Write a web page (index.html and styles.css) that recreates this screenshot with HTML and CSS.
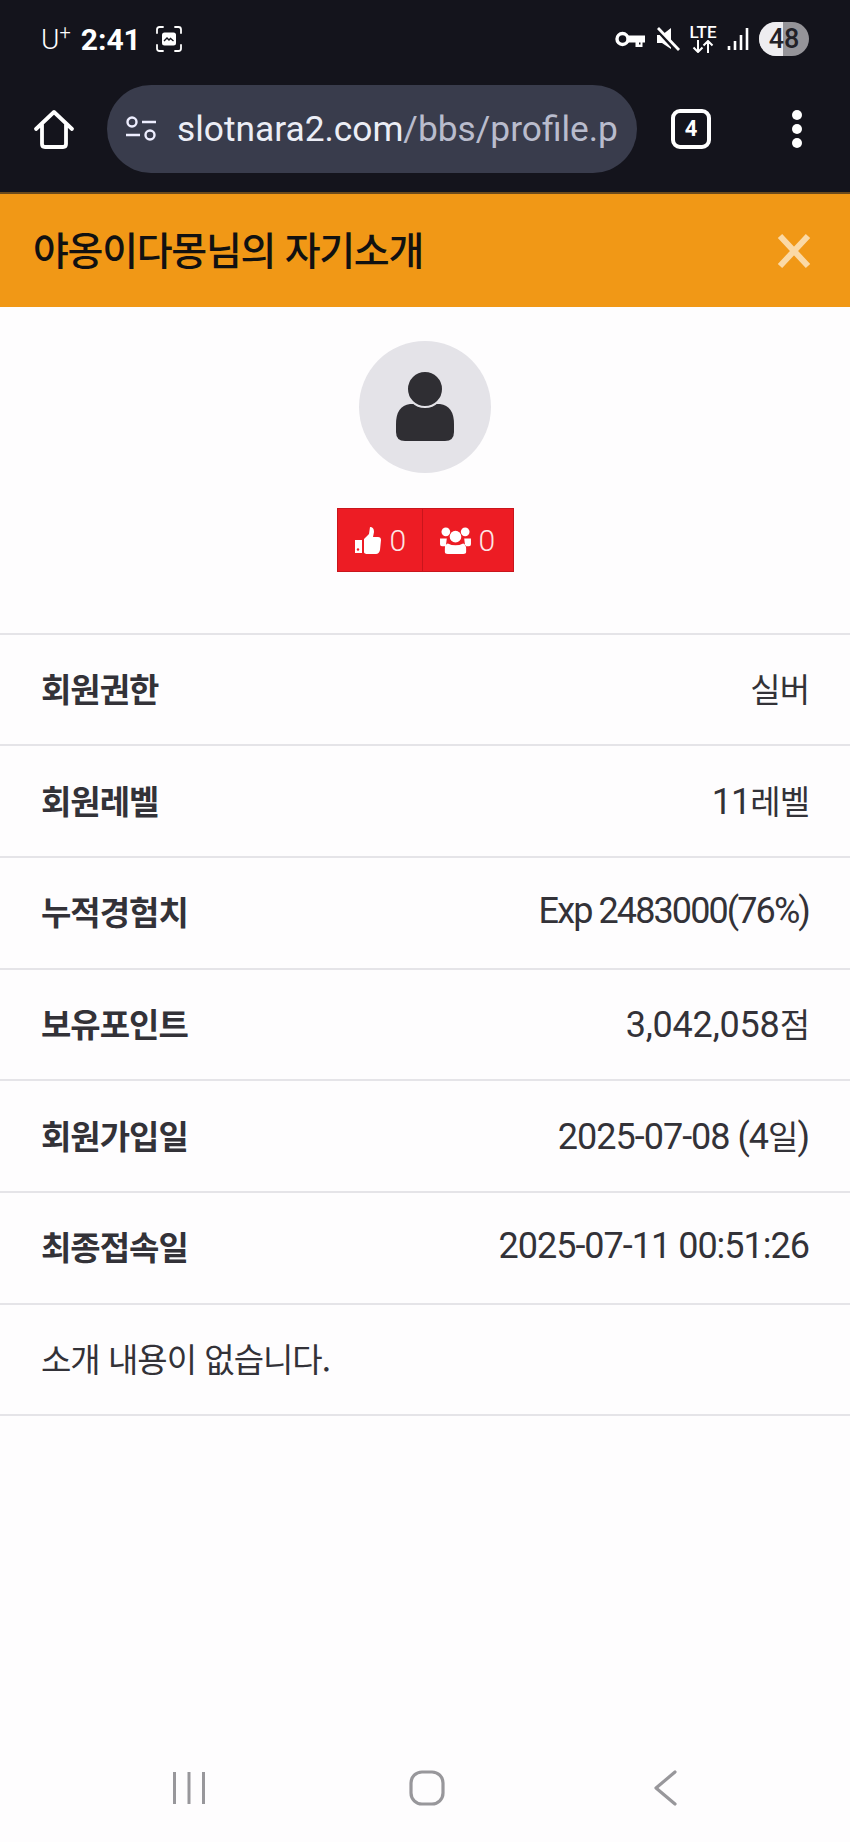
FILE: index.html
```html
<!DOCTYPE html>
<html lang="ko">
<head>
    <meta charset="UTF-8">
    <meta name="viewport" content="width=device-width, initial-scale=1.0">
    <title>야옹이다몽님의 자기소개</title>
    <link rel="stylesheet" href="styles.css">
</head>
<body>
    <div class="phone">
        <div class="top-chrome">
            <div class="status-bar">
                <div class="status-left">
                    <span class="carrier">U<sup>+</sup></span>
                    <span class="clock">2:41</span>
                    <svg class="shot-icon" width="28" height="28" viewBox="0 0 28 28">
                        <path d="M2 8V4.500Q2 2 4.500 2H8M20 2h3.500Q26 2 26 4.500V8M26 20v3.500Q26 26 23.500 26H20M8 26H4.500Q2 26 2 23.500V20" fill="none" stroke="#fff" stroke-width="1.800" stroke-linecap="round"/>
                        <path d="M7 10Q7 7.500 9.500 7.500h9Q21 7.500 21 10v8Q21 20.500 18.500 20.500h-9Q7 20.500 7 18Z" fill="#fff"/>
                        <path d="M9 16l3-3 2 2 1.500-1.500 3 2.500" fill="none" stroke="#14141c" stroke-width="1.400"/>
                    </svg>
                </div>
                <div class="status-right">
                    <svg width="30" height="18" viewBox="0 0 30 18">
                        <circle cx="7.500" cy="9" r="5.500" fill="none" stroke="#fff" stroke-width="3.400"/>
                        <path d="M13 5.500h17v7h-2.500V17h-7v-4.500H13Zm11 7v2h1.500v-2Z" fill="#fff"/>
                    </svg>
                    <svg width="24" height="24" viewBox="0 0 24 24">
                        <path d="M1 8h5l9-7v21l-9-6H1Z" fill="#fff"/>
                        <path d="M0 1l21 23" stroke="#14141c" stroke-width="4"/>
                        <path d="M2 1l21 22" stroke="#fff" stroke-width="2.800"/>
                    </svg>
                    <div class="lte">
                        <span>LTE</span>
                        <svg width="22" height="13" viewBox="0 0 22 13">
                            <path d="M6 0v12M1.500 7.500L6 12l4.500-4.500M16 13V1M11.500 5.500L16 1l4.500 4.500" fill="none" stroke="#fff" stroke-width="2"/>
                        </svg>
                    </div>
                    <svg width="22" height="24" viewBox="0 0 22 24">
                        <path d="M2 19v4M8 14v9M14 8v15M20 1v22" stroke="#fff" stroke-width="2.600"/>
                    </svg>
                    <div class="battery"><span class="battery-fill"></span><span class="battery-num">48</span></div>
                </div>
            </div>
            <div class="url-row">
                <svg class="home-icon" width="42" height="42" viewBox="0 0 42 42">
                    <path d="M3 21L21 4l18 17M9 16v20q0 3 3 3h18q3 0 3-3V16" fill="none" stroke="#fff" stroke-width="3.800" stroke-linecap="round" stroke-linejoin="round"/>
                </svg>
                <div class="url-box">
                    <svg width="34" height="28" viewBox="0 0 34 28">
                        <circle cx="8" cy="7" r="4.500" fill="none" stroke="#eef" stroke-width="2.400"/>
                        <path d="M18 7h14M2 20h14" stroke="#eef" stroke-width="2.400"/>
                        <circle cx="26" cy="20" r="4.500" fill="none" stroke="#eef" stroke-width="2.400"/>
                    </svg>
                    <span class="url-text"><span class="url-host">slotnara2.com</span>/bbs/profile.p</span>
                </div>
                <div class="tab-count">4</div>
                <div class="menu-dots"><i></i><i></i><i></i></div>
            </div>
        </div>

        <div class="title-bar">
            <h1>야옹이다몽님의 자기소개</h1>
            <svg width="36" height="36" viewBox="0 0 36 36">
                <path d="M4 3l28 30M32 3L4 33" stroke="#fbd9a5" stroke-width="6"/>
            </svg>
        </div>

        <div class="profile-head">
            <div class="avatar">
                <svg width="58" height="72" viewBox="0 0 58 72">
                    <path d="M14 33h30q14 2 14 20v8q0 9-9 9H9q-9 0-9-9v-8q0-18 14-20Z" fill="#2f2e33"/>
                    <circle cx="29" cy="18" r="18" fill="#2f2e33" stroke="#e4e3e8" stroke-width="2"/>
                </svg>
            </div>
            <div class="counters">
                <div class="counter counter-like">
                    <svg width="26" height="27" viewBox="0 0 26 27">
                        <path d="M0 13h7v13H0Z" fill="#fff"/>
                        <circle cx="3" cy="22.500" r="1.200" fill="#ed1c24"/>
                        <path d="M9 12l5-5 1-7q4 0 4 5l-1 5h5q3 0 3 3l-1 10q-1 4-4 4H13q-4 0-4-2Z" fill="#fff"/>
                    </svg>
                    <span>0</span>
                </div>
                <div class="counter counter-friend">
                    <svg width="31" height="29" viewBox="0 0 32 30">
                        <circle cx="6" cy="6" r="4.500" fill="#fff"/>
                        <circle cx="26" cy="6" r="4.500" fill="#fff"/>
                        <circle cx="16" cy="11" r="6" fill="#fff"/>
                        <path d="M0 13h7l-1 8H2Q0 21 0 19ZM32 13h-7l1 8h4q2 0 2-2ZM8 18q8 4 16 0q3 1 3 5v4q0 2-3 2H8q-3 0-3-2v-4q0-4 3-5Z" fill="#fff"/>
                    </svg>
                    <span>0</span>
                </div>
            </div>
        </div>

        <div class="info-list">
            <div class="info-row"><b>회원권한</b><span>실버</span></div>
            <div class="info-row"><b>회원레벨</b><span><span class="num">11</span>레벨</span></div>
            <div class="info-row"><b>누적경험치</b><span class="num num-tight">Exp 2483000(76%)</span></div>
            <div class="info-row"><b>보유포인트</b><span><span class="num num-wide">3,042,058</span>점</span></div>
            <div class="info-row"><b>회원가입일</b><span><span class="num">2025-07-08 (4</span>일<span class="num">)</span></span></div>
            <div class="info-row"><b>최종접속일</b><span class="num">2025-07-11 00:51:26</span></div>
            <div class="info-row">소개 내용이 없습니다.</div>
        </div>

        <div class="nav-bar">
            <svg width="36" height="34" viewBox="0 0 36 34">
                <path d="M3.500 1v32M18 1v32M32.500 1v32" stroke="#98979b" stroke-width="3"/>
            </svg>
            <svg class="nav-home" width="36" height="36" viewBox="0 0 36 36">
                <rect x="2" y="2" width="32" height="32" rx="11" fill="none" stroke="#98979b" stroke-width="3.200"/>
            </svg>
            <svg class="nav-back" width="24" height="36" viewBox="0 0 24 36">
                <path d="M22 2L3 18l19 16" fill="none" stroke="#98979b" stroke-width="3.200" stroke-linecap="round" stroke-linejoin="round"/>
            </svg>
        </div>
    </div>
</body>
</html>
```

FILE: styles.css
```css
* {
    box-sizing: border-box;
}
body {
    margin: 0;
    background-color: #fefdfe;
    font-family: "Noto Sans CJK KR", "Noto Sans", Roboto, sans-serif;
    color: #333238;
}
.phone {
    width: 850px;
    height: 1842px;
    display: flex;
    flex-direction: column;
}

/* status bar and browser bar */
.top-chrome {
    height: 194px;
    flex: none;
    background-color: #14141c;
    color: #fff;
    border-bottom: 2px solid #6b4a1c;
}
.status-bar {
    height: 78px;
    padding: 0 41px;
    display: flex;
    justify-content: space-between;
    align-items: center;
}
.status-left, .status-right {
    display: flex;
    align-items: center;
}
.carrier {
    font-family: Roboto, sans-serif;
    font-size: 28px;
    font-weight: 300;
}
.carrier sup {
    font-size: 20px;
    line-height: 0;
    vertical-align: 10px;
}
.clock {
    margin-left: 10px;
    font-family: Roboto, sans-serif;
    font-size: 30px;
    font-weight: 700;
}
.shot-icon {
    margin-left: 14px;
}
.status-right {
    gap: 10.500px;
}
.lte {
    width: 26px;
    display: flex;
    flex-direction: column;
    align-items: center;
    font-family: Roboto, sans-serif;
    font-size: 17px;
    font-weight: 500;
    line-height: 15px;
}
.battery {
    position: relative;
    width: 50px;
    height: 34px;
    border-radius: 17px;
    overflow: hidden;
    background-color: #959499;
    text-align: center;
}
.battery-fill {
    position: absolute;
    left: 0;
    top: 0;
    width: 24px;
    height: 34px;
    background-color: #eeedf0;
}
.battery-num {
    position: relative;
    font-family: Roboto, sans-serif;
    font-size: 27px;
    font-weight: 500;
    line-height: 34px;
    color: #222127;
}
.url-row {
    height: 102px;
    padding-left: 33px;
    display: flex;
    align-items: center;
}
.url-box {
    width: 530px;
    height: 88px;
    margin-left: 32px;
    padding-left: 17px;
    border-radius: 44px;
    background-color: #393c4c;
    display: flex;
    align-items: center;
    gap: 19px;
}
.url-text {
    font-family: Roboto, sans-serif;
    font-size: 35.300px;
    color: #b9bccd;
    white-space: nowrap;
}
.url-host {
    color: #eceef6;
}
.tab-count {
    width: 40px;
    height: 40px;
    margin-left: 34px;
    border: 4px solid #fff;
    border-radius: 9px;
    font-family: Roboto, sans-serif;
    font-size: 22px;
    font-weight: 700;
    line-height: 32px;
    text-align: center;
}
.menu-dots {
    margin-left: 81px;
    display: flex;
    flex-direction: column;
    gap: 4px;
}
.menu-dots i {
    width: 10px;
    height: 10px;
    border-radius: 50%;
    background-color: #fff;
}

/* orange title */
.title-bar {
    height: 113px;
    flex: none;
    padding: 0 38px 0 33px;
    background-color: #f19816;
    display: flex;
    justify-content: space-between;
    align-items: center;
}
.title-bar h1 {
    margin: 0 0 6px;
    font-size: 39px;
    font-weight: 500;
    letter-spacing: -1.300px;
    color: #111;
}

/* avatar and red counters */
.profile-head {
    height: 325.500px;
    flex: none;
    padding-top: 34px;
    display: flex;
    flex-direction: column;
    align-items: center;
}
.avatar {
    width: 132px;
    height: 132px;
    border-radius: 50%;
    background-color: #e4e3e8;
    display: flex;
    justify-content: center;
    align-items: center;
}
.counters {
    margin-top: 35px;
    display: flex;
}
.counter {
    height: 64px;
    background-color: #ed1c24;
    border: 1px solid #c9151c;
    display: flex;
    align-items: center;
    color: #fde6e6;
    font-family: Roboto, sans-serif;
    font-size: 30px;
    font-weight: 300;
}
.counter-like {
    width: 86px;
    padding-left: 17px;
    gap: 9px;
}
.counter-friend {
    width: 91px;
    padding-left: 17px;
    gap: 8px;
    border-left: 0;
}

/* profile rows */
.info-list {
    border-top: 2px solid #e5e4e8;
}
.info-row {
    height: 111.700px;
    padding: 0 41px 3px;
    border-bottom: 2px solid #e5e4e8;
    display: flex;
    justify-content: space-between;
    align-items: center;
    font-size: 33px;
    letter-spacing: -1px;
}
.info-row b {
    font-weight: 700;
}
.num {
    font-family: Roboto, sans-serif;
    font-size: 36px;
    font-weight: 400;
    letter-spacing: -1px;
}
.num-tight {
    letter-spacing: -1.900px;
}
.num-wide {
    letter-spacing: -0.200px;
}

/* android nav */
.nav-bar {
    margin-top: auto;
    height: 102px;
    flex: none;
    padding: 0 0 7px 171px;
    display: flex;
    align-items: center;
}
.nav-home {
    margin-left: 202px;
}
.nav-back {
    margin-left: 208px;
}
```
